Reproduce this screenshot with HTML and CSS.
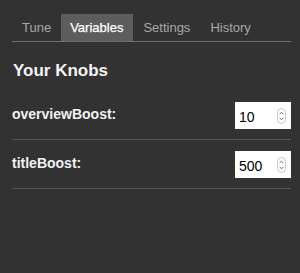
FILE: index.html
```html
<!DOCTYPE html>
<html lang="en">
<head>
    <meta charset="UTF-8">
    <title>Knobs</title>
    <link rel="stylesheet" href="styles.css">
</head>
<body>
    <div class="panel">
        <div class="tabs">
            <div class="tab">Tune</div>
            <div class="tab active">Variables</div>
            <div class="tab">Settings</div>
            <div class="tab">History</div>
        </div>

        <h2 class="title">Your Knobs</h2>

        <div class="knob-row">
            <label class="knob-label">overviewBoost:</label>
            <div class="number-box">
                <span class="number-value">10</span>
                <svg class="spinner" width="9" height="16" viewBox="0 0 9 16">
                    <rect x="0.5" y="0.5" width="8" height="15" rx="4" fill="#fff" stroke="#c8c8c8"/>
                    <path d="M2.6 6.2 L4.5 4.2 L6.4 6.2" fill="none" stroke="#777" stroke-width="1"/>
                    <path d="M2.6 9.8 L4.5 11.8 L6.4 9.8" fill="none" stroke="#777" stroke-width="1"/>
                </svg>
            </div>
        </div>
        <div class="knob-row">
            <label class="knob-label">titleBoost:</label>
            <div class="number-box">
                <span class="number-value">500</span>
                <svg class="spinner" width="9" height="16" viewBox="0 0 9 16">
                    <rect x="0.5" y="0.5" width="8" height="15" rx="4" fill="#fff" stroke="#c8c8c8"/>
                    <path d="M2.6 6.2 L4.5 4.2 L6.4 6.2" fill="none" stroke="#777" stroke-width="1"/>
                    <path d="M2.6 9.8 L4.5 11.8 L6.4 9.8" fill="none" stroke="#777" stroke-width="1"/>
                </svg>
            </div>
        </div>
    </div>
</body>
</html>
```

FILE: styles.css
```css
html, body {
    margin: 0;
    height: 100%;
    background: #323232;
}
body {
    font-family: "Liberation Sans", Arial, sans-serif;
    color: #f2f2f2;
}
.panel {
    padding: 14px 9px 0 12px;
}
.tabs {
    display: flex;
    border-bottom: 1px solid #707070;
}
.tab {
    height: 27px;
    line-height: 28px;
    padding: 0 10px;
    font-size: 13px;
    color: #a8a8a8;
}
.tab.active {
    background-color: #5d5d5d;
    color: #ffffff;
    padding: 0 10px 0 9px;
    -webkit-text-stroke: 0.25px #ffffff;
}
.title {
    margin: 19px 0 10px 1px;
    font-size: 17px;
    line-height: 20px;
    font-weight: bold;
    color: #f4f4f4;
}
.knob-row {
    display: flex;
    justify-content: space-between;
    align-items: center;
    padding: 11px 0 10px;
    border-bottom: 1px solid #555;
}
.knob-label {
    font-size: 14px;
    font-weight: bold;
    color: #f2f2f2;
    margin-top: -3px;
}
.number-box {
    display: flex;
    align-items: center;
    justify-content: space-between;
    width: 56px;
    height: 27px;
    box-sizing: border-box;
    padding: 0 5px 0 4px;
    background: #fff;
    color: #000;
}
.number-value {
    font-size: 14px;
    margin-top: 2px;
}
```
